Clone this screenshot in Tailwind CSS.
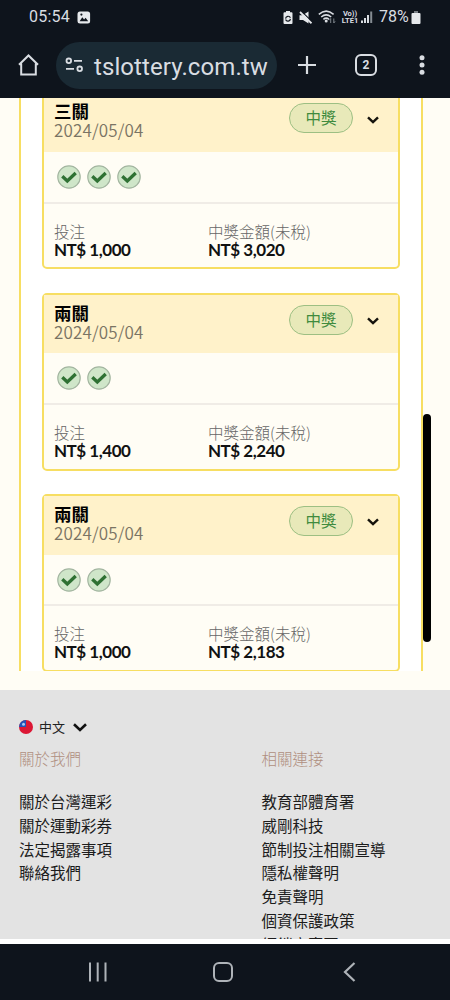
<!DOCTYPE html>
<html lang="zh-Hant">
<head>
<meta charset="utf-8">
<meta name="viewport" content="width=device-width">
<title>台灣運彩</title>
<script src="https://cdn.jsdelivr.net/npm/@tailwindcss/browser@4"></script>
</head>
<body class="w-[450px] h-[1000px] overflow-hidden bg-[#0e141c] font-['Noto_Sans_CJK_TC',sans-serif]">
<svg class="hidden">
  <symbol id="check" viewBox="0 0 24 24"><circle cx="12" cy="12" r="11.2" fill="#cfe6c9" stroke="#a3b5a0" stroke-width="1.2"/><path d="M5.300 11.300l5 4.700 8.400-8" fill="none" stroke="#2e7133" stroke-width="3.300"/></symbol>
  <symbol id="chev" viewBox="0 0 12 8"><path d="M1 1.300l5 4.800 5-4.800" fill="none" stroke="#15130c" stroke-width="2.400"/></symbol>
</svg>
<div class="flex h-[1000px] flex-col">
  <header class="h-[98px] shrink-0 bg-[#0e141c] font-[Roboto,sans-serif] text-[#d9dde2]">
    <div class="flex h-[34px] items-center pl-[29px] pr-[29px]">
      <span class="w-[41px] whitespace-nowrap text-[16px] leading-none tracking-[0.200px]">05:54</span>
      <svg class="ml-[7px] h-[13px] w-[14px]" viewBox="0 0 14 13"><rect x=".5" y=".5" width="12.6" height="12" rx="2.5" fill="#e6e9ec"/><path d="M2.6 10.2l2.700-4 1.800 2.200 1.500-1.600 2.600 3.400z" fill="#0e141c"/><circle cx="4.400" cy="3.600" r="1.100" fill="#0e141c"/></svg>
      <div class="ml-auto flex items-center">
        <svg class="h-[13px] w-[10px]" viewBox="0 0 10 13"><path d="M3 0h4v1.300h1.500q1 0 1 1V12q0 1-1 1h-7q-1 0-1-1V2.300q0-1 1-1H3z" fill="#e6e9ec"/><path d="M2.600 7.600a2.500 2.500 0 0 1 4.800-.8M7.400 7.900a2.500 2.500 0 0 1-4.800.7" fill="none" stroke="#0e141c" stroke-width="1.200"/></svg>
        <svg class="ml-[6px] h-[13px] w-[13px]" viewBox="0 0 13 13"><path d="M.5 4.200h3L9.500.5V12.500L4 9H.5z" fill="#e6e9ec"/><path d="M1.500-.5l12 11.500" stroke="#0e141c" stroke-width="1.200"/><path d="M1 1l11.500 11.300" stroke="#e6e9ec" stroke-width="1.800"/></svg>
        <svg class="ml-[6px] h-[14px] w-[18px]" viewBox="0 0 18 14"><g fill="none" stroke="#d9dde2" stroke-width="1.500"><path d="M.8 4.400Q8.200-2.200 15.600 4.400M3.200 7Q8.200 2.700 13.200 7M5.400 9.300Q8.200 7 11 9.300"/></g><circle cx="8.200" cy="11" r="1.500" fill="#d9dde2"/><path d="M12.700 13V8.500l-1.300 1.700M15.800 8.500V13l1.300-1.700" fill="none" stroke="#7d848b"/></svg>
        <div class="ml-[5px] flex w-[18px] flex-col items-center text-[7.500px] font-bold leading-[7px]"><div class="whitespace-nowrap">Vo))</div><div class="whitespace-nowrap">LTE1</div></div>
        <svg class="ml-[2px] h-[12px] w-[12px]" viewBox="0 0 12 12"><path d="M0 12V9.500h2V12zM3 12V7h2v5zM6 12V4h2v8z" fill="#d9dde2"/><path d="M9.200 12V.5h2V12z" fill="#858c93"/></svg>
        <span class="ml-[6px] w-[30px] whitespace-nowrap text-[16px] leading-none">78%</span>
        <svg class="ml-[2px] h-[13px] w-[10px]" viewBox="0 0 10 13"><path d="M3 .5h4V2h1.500q1 0 1 1v9q0 1-1 1h-7q-1 0-1-1V3q0-1 1-1H3z" fill="#e6e9ec"/><path d="M3 .5h4V2H3z" fill="#777e85"/></svg>
      </div>
    </div>
    <div class="flex h-[62px] items-center pl-[18px]">
      <svg class="h-[22px] w-[21px]" viewBox="0 0 21 22"><path d="M1 10.800L10.500 1.500 20 10.800M3.200 9.500v11h14.600v-11" fill="none" stroke="#d9dde2" stroke-width="2"/></svg>
      <div class="ml-[17px] flex h-[47px] w-[221px] items-center rounded-full bg-[#1a2a34] pl-[9px]">
        <svg class="h-[16px] w-[20px] shrink-0" viewBox="0 0 20 16"><g fill="none" stroke="#d9dde2" stroke-width="1.800"><circle cx="3.800" cy="3.800" r="2.300"/><path d="M9 3.800H17M1 11.800H9"/><circle cx="14.700" cy="11.800" r="2.300"/></g></svg>
        <span class="ml-[9px] pt-[3px] whitespace-nowrap text-[24px] leading-none tracking-[0.090px]">tslottery.com.tw</span>
      </div>
      <svg class="ml-[20px] h-[20px] w-[20px]" viewBox="0 0 20 20"><path d="M10 1v18M1 10h18" stroke="#d9dde2" stroke-width="2.200"/></svg>
      <div class="ml-[38px] flex h-[22px] w-[22px] items-center justify-center rounded-[6px] border-2 border-[#d9dde2] text-[12px] font-bold leading-none">2</div>
      <svg class="ml-[42px] h-[20px] w-[6px]" viewBox="0 0 6 20"><g fill="#d9dde2"><circle cx="3" cy="2.800" r="2.500"/><circle cx="3" cy="10" r="2.500"/><circle cx="3" cy="17.200" r="2.500"/></g></svg>
    </div>
  </header>

  <main class="relative h-[592px] shrink-0 overflow-hidden bg-[#fffdf5] pl-[19px]">
    <div class="h-[573px] w-[404px] overflow-hidden border-x-2 border-[#f7de62] bg-white px-[21px]">
      <article class="-mt-[7px] h-[178px] w-[358px] rounded-[5px] border-2 border-[#f7de62] bg-[#fffdf5]">
        <div class="flex h-[59px] bg-[#fff2ca] pl-[10px] pr-[19px] pt-[8px]">
          <div><h2 class="text-[17.500px] font-bold leading-[19px] text-black">三關</h2><p class="text-[17px] font-[350] leading-[19px] tracking-[0.150px] text-[#7a7464]">2024/05/04</p></div>
          <div class="ml-auto mt-[2px] flex h-[30px] w-[64px] items-center justify-center rounded-full border border-[#9dbf83] bg-[#e8e9b9] text-[15.500px] leading-none text-[#3f8b3e]">中獎</div>
          <svg class="ml-[14px] mt-[15px] h-[8px] w-[12px]"><use href="#chev"/></svg>
        </div>
        <div class="flex h-[52px] items-center gap-[6px] border-b-2 border-[#f0ece6] pl-[13px]">
          <svg class="h-[24px] w-[24px]"><use href="#check"/></svg><svg class="h-[24px] w-[24px]"><use href="#check"/></svg><svg class="h-[24px] w-[24px]"><use href="#check"/></svg>
        </div>
        <div class="flex pl-[10px] pt-[18px]">
          <div class="w-[154px]"><p class="text-[15.500px] font-light leading-[19px] text-[#666]">投注</p><p class="font-[Lato,sans-serif] text-[17px] font-bold leading-[18px] tracking-[-0.480px] text-[#111]">NT$ 1,000</p></div>
          <div><p class="text-[15.500px] font-light leading-[19px] text-[#666]">中獎金額(未稅)</p><p class="font-[Lato,sans-serif] text-[17px] font-bold leading-[18px] tracking-[-0.480px] text-[#111]">NT$ 3,020</p></div>
        </div>
      </article>
      <article class="mt-[24px] h-[178px] w-[358px] rounded-[5px] border-2 border-[#f7de62] bg-[#fffdf5]">
        <div class="flex h-[58px] bg-[#fff2ca] pl-[10px] pr-[19px] pt-[8px]">
          <div><h2 class="text-[17.500px] font-bold leading-[19px] text-black">兩關</h2><p class="text-[17px] font-[350] leading-[19px] tracking-[0.150px] text-[#7a7464]">2024/05/04</p></div>
          <div class="ml-auto mt-[2px] flex h-[30px] w-[64px] items-center justify-center rounded-full border border-[#9dbf83] bg-[#e8e9b9] text-[15.500px] leading-none text-[#3f8b3e]">中獎</div>
          <svg class="ml-[14px] mt-[14px] h-[8px] w-[12px]"><use href="#chev"/></svg>
        </div>
        <div class="flex h-[52px] items-center gap-[6px] border-b-2 border-[#f0ece6] pl-[13px]">
          <svg class="h-[24px] w-[24px]"><use href="#check"/></svg><svg class="h-[24px] w-[24px]"><use href="#check"/></svg>
        </div>
        <div class="flex pl-[10px] pt-[18px]">
          <div class="w-[154px]"><p class="text-[15.500px] font-light leading-[19px] text-[#666]">投注</p><p class="font-[Lato,sans-serif] text-[17px] font-bold leading-[18px] tracking-[-0.480px] text-[#111]">NT$ 1,400</p></div>
          <div><p class="text-[15.500px] font-light leading-[19px] text-[#666]">中獎金額(未稅)</p><p class="font-[Lato,sans-serif] text-[17px] font-bold leading-[18px] tracking-[-0.480px] text-[#111]">NT$ 2,240</p></div>
        </div>
      </article>
      <article class="mt-[23px] h-[178px] w-[358px] rounded-[5px] border-2 border-[#f7de62] bg-[#fffdf5]">
        <div class="flex h-[59px] bg-[#fff2ca] pl-[10px] pr-[19px] pt-[8px]">
          <div><h2 class="text-[17.500px] font-bold leading-[19px] text-black">兩關</h2><p class="text-[17px] font-[350] leading-[19px] tracking-[0.150px] text-[#7a7464]">2024/05/04</p></div>
          <div class="ml-auto mt-[2px] flex h-[30px] w-[64px] items-center justify-center rounded-full border border-[#9dbf83] bg-[#e8e9b9] text-[15.500px] leading-none text-[#3f8b3e]">中獎</div>
          <svg class="ml-[14px] mt-[14px] h-[8px] w-[12px]"><use href="#chev"/></svg>
        </div>
        <div class="flex h-[51px] items-center gap-[6px] border-b-2 border-[#f0ece6] pl-[13px]">
          <svg class="h-[24px] w-[24px]"><use href="#check"/></svg><svg class="h-[24px] w-[24px]"><use href="#check"/></svg>
        </div>
        <div class="flex pl-[10px] pt-[18px]">
          <div class="w-[154px]"><p class="text-[15.500px] font-light leading-[19px] text-[#666]">投注</p><p class="font-[Lato,sans-serif] text-[17px] font-bold leading-[18px] tracking-[-0.480px] text-[#111]">NT$ 1,000</p></div>
          <div><p class="text-[15.500px] font-light leading-[19px] text-[#666]">中獎金額(未稅)</p><p class="font-[Lato,sans-serif] text-[17px] font-bold leading-[18px] tracking-[-0.480px] text-[#111]">NT$ 2,183</p></div>
        </div>
      </article>
    </div>
    <div class="absolute left-[423px] top-[316px] h-[228px] w-[8px] rounded-full bg-black"></div>
  </main>

  <footer class="h-[249px] shrink-0 overflow-hidden bg-[#e3e3e3] pl-[19px] pt-[28px]">
    <div class="flex h-[18px] items-center">
      <svg class="h-[15px] w-[15px]" viewBox="0 0 15 15"><circle cx="7" cy="7" r="7" fill="#dc1735"/><path d="M7 0a7 7 0 0 0-7 7h7z" fill="#2454b8"/><circle cx="4.500" cy="4.300" r="1.500" fill="#a9c8f2"/></svg>
      <span class="ml-[5px] w-[26px] whitespace-nowrap pb-[2px] text-[13px] leading-none text-[#222]">中文</span>
      <svg class="ml-[8px] h-[9px] w-[14px]" viewBox="0 0 14 9"><path d="M1 1.300l6 5.700 6-5.700" fill="none" stroke="#111" stroke-width="2.600"/></svg>
    </div>
    <div class="mt-[10px] grid grid-cols-[242.500px_1fr] text-[15.500px]">
      <div>
        <h3 class="h-[44px] font-light leading-[24px] text-[#b08f80]">關於我們</h3>
        <ul class="leading-[23.750px] text-[#1c1c1c]"><li>關於台灣運彩</li><li>關於運動彩券</li><li>法定揭露事項</li><li>聯絡我們</li></ul>
      </div>
      <div>
        <h3 class="h-[44px] font-light leading-[24px] text-[#b08f80]">相關連接</h3>
        <ul class="leading-[23.750px] text-[#1c1c1c]"><li>教育部體育署</li><li>威剛科技</li><li>節制投注相關宣導</li><li>隱私權聲明</li><li>免責聲明</li><li>個資保護政策</li><li>經銷商專區</li></ul>
      </div>
    </div>
  </footer>
  <div class="h-[5px] shrink-0 bg-white"></div>
  <nav class="flex h-[56px] shrink-0 items-center bg-[#0e141c] pl-[88px]">
    <svg class="h-[20px] w-[20px]" viewBox="0 0 20 20"><path d="M2 .5v19M9.700.5v19M17.500.5v19" stroke="#aeb3b8" stroke-width="2"/></svg>
    <div class="ml-[105px] h-[20px] w-[20px] rounded-[6px] border-2 border-[#aeb3b8]"></div>
    <svg class="ml-[110px] h-[20px] w-[13px]" viewBox="0 0 13 20"><path d="M11.500 1L2 10l9.500 9" fill="none" stroke="#aeb3b8" stroke-width="2.200"/></svg>
  </nav>
</div>
</body>
</html>
